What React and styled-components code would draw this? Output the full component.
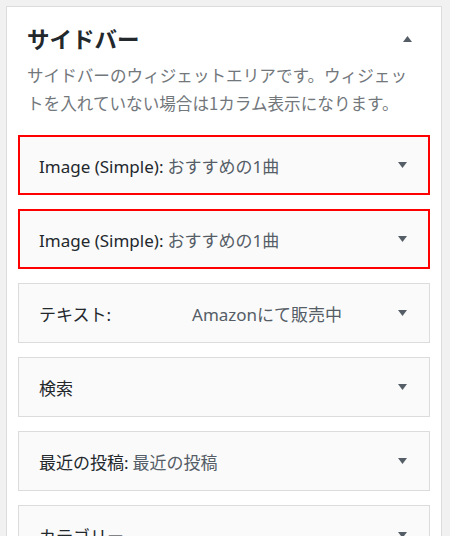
import React from 'react';
import styled, { createGlobalStyle } from 'styled-components';

const GlobalStyle = createGlobalStyle`
  body {
    margin: 0;
    background: #f1f1f1;
    font-family: "Noto Sans", "Noto Sans CJK JP", sans-serif;
    overflow: hidden;
  }
`;

const Page = styled.div`
  padding: 6px 8px 0 6px;
  height: 536px;
  box-sizing: border-box;
  overflow: hidden;
`;

const Panel = styled.div`
  width: 436px;
  box-sizing: border-box;
  background: #fff;
  border: 1px solid #dcdcde;
  border-bottom: none;
  padding: 0 11px 40px;
`;

const Header = styled.div`
  display: flex;
  align-items: center;
  justify-content: space-between;
  padding: 16px 18px 0 9px;
`;

const Title = styled.h2`
  margin: 0;
  font-family: "Noto Sans CJK JP", sans-serif;
  font-size: 22.5px;
  font-weight: 700;
  line-height: 31px;
  color: #23282d;
`;

const Description = styled.p`
  margin: 7px 0 18px;
  padding-left: 9px;
  width: 390px;
  font-family: "Noto Sans CJK JP", sans-serif;
  font-size: 16.6px;
  line-height: 28px;
  color: #72777c;
`;

const WidgetList = styled.div`
  display: flex;
  flex-direction: column;
  gap: 14px;
`;

const Widget = styled.div`
  height: 60px;
  box-sizing: border-box;
  display: flex;
  align-items: center;
  justify-content: space-between;
  background: #fafafa;
  border: ${({ $marked }) => ($marked ? '2px solid #f00' : '1px solid #dcdcde')};
  padding: 0 ${({ $marked }) => ($marked ? 21 : 22)}px 0 ${({ $marked }) => ($marked ? 19 : 20)}px;
`;

const WidgetTitle = styled.div`
  font-family: "Noto Sans", "Noto Sans CJK JP", sans-serif;
  font-size: 17px;
  color: #23282d;
  white-space: nowrap;
`;

const InTitle = styled.span`
  color: #555d66;
  margin-left: ${({ $gap }) => $gap || 4}px;
`;

const Arrow = ({ up }) => (
  <svg width="9" height="6" viewBox="0 0 9 6">
    <path d={up ? 'M0 6 L4.5 0 L9 6 Z' : 'M0 0 L9 0 L4.5 6 Z'} fill="#555d66" />
  </svg>
);

const widgets = [
  { name: 'Image (Simple):', sub: 'おすすめの1曲', marked: true },
  { name: 'Image (Simple):', sub: 'おすすめの1曲', marked: true },
  { name: 'テキスト:', sub: 'Amazonにて販売中', gap: 81 },
  { name: '検索' },
  { name: '最近の投稿:', sub: '最近の投稿' },
  { name: 'カテゴリー' },
];

export default function App() {
  return (
    <>
      <GlobalStyle />
      <Page>
        <Panel>
          <Header>
            <Title>サイドバー</Title>
            <Arrow up />
          </Header>
          <Description>
            サイドバーのウィジェットエリアです。ウィジェットを入れていない場合は1カラム表示になります。
          </Description>
          <WidgetList>
            {widgets.map((w, i) => (
              <Widget key={i} $marked={w.marked}>
                <WidgetTitle>
                  {w.name}
                  {w.sub && <InTitle $gap={w.gap}>{w.sub}</InTitle>}
                </WidgetTitle>
                <Arrow />
              </Widget>
            ))}
          </WidgetList>
        </Panel>
      </Page>
    </>
  );
}
